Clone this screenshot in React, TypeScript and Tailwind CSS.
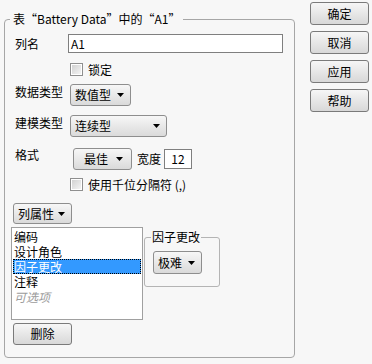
const font = "font-['Noto_Sans_CJK_SC','Noto_Sans',sans-serif]";

function Tri() {
  return (
    <svg width="7" height="4" viewBox="0 0 7 4" className="shrink-0">
      <polygon points="0,0 7,0 3.5,4" fill="#000" />
    </svg>
  );
}

function Drop({ label, className }: { label: string; className: string }) {
  return (
    <div
      className={`flex items-center justify-between rounded-[3px] border border-[#8e8e8e] bg-gradient-to-b from-[#f7f7f7] to-[#dadada] pl-[4px] pr-[6px] leading-[16px] ${className}`}
    >
      <span>{label}</span>
      <Tri />
    </div>
  );
}

function Button({ label, className }: { label: string; className: string }) {
  return (
    <div
      className={`flex items-center justify-center rounded-[3px] border border-[#7a7a7a] bg-gradient-to-b from-[#f6f6f6] to-[#d8d8d8] leading-[16px] ${className}`}
    >
      {label}
    </div>
  );
}

function Check({ label }: { label: string }) {
  return (
    <div className="ml-[59px] flex h-[13px] items-center gap-[5px]">
      <div className="flex h-[13px] w-[13px] items-center justify-center border border-[#8f8f8f] bg-white">
        <div className="h-[9px] w-[9px] bg-gradient-to-br from-[#d2d2d2] to-[#f4f4f4]" />
      </div>
      <span className="leading-[16px]">{label}</span>
    </div>
  );
}

const props = ['编码', '设计角色', '因子更改', '注释'];

export default function App() {
  return (
    <div className={`flex h-[364px] w-[372px] bg-[#f7f7f7] text-[12px] text-black ${font}`}>
      <fieldset className="ml-[4px] mt-[10px] h-[348px] w-[291px] rounded-[4px] border border-[#a6a6a6]">
        <legend className="ml-[5px] px-[3px] leading-[18px]">表“Battery Data”中的“A1”</legend>
        <div className="flex flex-col pl-[6px]">
          <div className="mt-[6px] flex h-[19px] items-center">
            <span className="ml-[4px] w-[53px]">列名</span>
            <div className="flex h-[19px] w-[215px] items-center border border-[#7f7f7f] bg-white pl-[2px]">A1</div>
          </div>

          <div className="mt-[10px]">
            <Check label="锁定" />
          </div>

          <div className="mt-[8px] flex items-start">
            <span className="ml-[4px] w-[55px] leading-[16px]">数据类型</span>
            <Drop label="数值型" className="h-[22px] w-[61px]" />
          </div>

          <div className="mt-[9px] flex items-start">
            <span className="ml-[4px] w-[55px] leading-[16px]">建模类型</span>
            <Drop label="连续型" className="h-[22px] w-[97px]" />
          </div>

          <div className="mt-[11px] flex items-start">
            <span className="ml-[4px] w-[58px] leading-[14px]">格式</span>
            <div className="flex h-[22px] items-center">
              <div className="flex h-[22px] w-[59px] items-center justify-center gap-[8px] rounded-[3px] border border-[#8e8e8e] bg-gradient-to-b from-[#f7f7f7] to-[#dadada] pl-[2px] leading-[16px]">
                <span>最佳</span>
                <Tri />
              </div>
              <span className="ml-[5px]">宽度</span>
              <div className="ml-[3px] flex h-[20px] w-[28px] items-center justify-center border border-[#7f7f7f] bg-white">12</div>
            </div>
          </div>

          <div className="mt-[8px]">
            <Check label="使用千位分隔符 (,)" />
          </div>

          <Drop label="列属性" className="ml-[2px] mt-[12px] h-[21px] w-[59px]" />

          <div className="mt-[3px] flex items-start">
            <div className="h-[93px] w-[132px] border border-[#a0a0a0] bg-white pt-[1px]">
              {props.map((p) => (
                <div
                  key={p}
                  className={
                    p === '因子更改'
                      ? 'mx-[1px] h-[15px] border border-dotted border-black bg-[#3399ff] leading-[13px] text-white'
                      : 'h-[15px] pl-[2px] leading-[15px]'
                  }
                >
                  {p}
                </div>
              ))}
              <div className="h-[15px] pl-[2px] italic leading-[15px] text-[#9c9c9c]">可选项</div>
            </div>

            <fieldset className="ml-[1px] mt-[4px] h-[56px] w-[76px] rounded-[3px] border border-[#b4b4b4]">
              <legend className="ml-[6px] px-[1px] leading-[12px]">因子更改</legend>
              <Drop label="极难" className="ml-[8px] mt-[8px] h-[23px] w-[49px]" />
            </fieldset>
          </div>

          <Button label="删除" className="ml-[2px] mt-[3px] h-[22px] w-[59px]" />
        </div>
      </fieldset>

      <div className="ml-[15px] mt-[2px] flex flex-col gap-[6px]">
        <Button label="确定" className="h-[23px] w-[59px]" />
        <Button label="取消" className="h-[23px] w-[59px]" />
        <Button label="应用" className="h-[23px] w-[59px]" />
        <Button label="帮助" className="h-[23px] w-[59px]" />
      </div>
    </div>
  );
}
